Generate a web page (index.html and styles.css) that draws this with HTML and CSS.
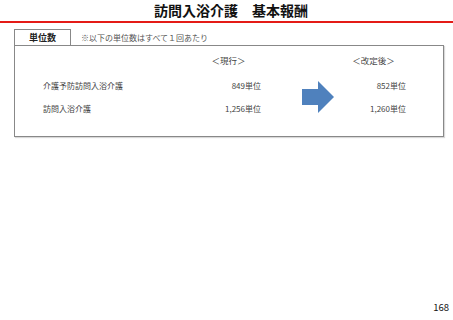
FILE: index.html
```html
<!DOCTYPE html>
<html lang="ja">
<head>
<meta charset="utf-8">
<link rel="stylesheet" href="styles.css">
</head>
<body>
<div class="page">
  <header class="header">
    <h1 class="title">訪問入浴介護　基本報酬</h1>
  </header>
  <main class="content">
    <div class="tabrow">
      <div class="tab">単位数</div>
      <div class="note">※以下の単位数はすべて１回あたり</div>
    </div>
    <div class="box">
      <div class="grid">
        <div class="head c2">＜現行＞</div>
        <div class="head c4">＜改定後＞</div>

        <div class="label r1 c1">介護予防訪問入浴介護</div>
        <div class="num r1 c2">849単位</div>
        <div class="arrow">
          <svg width="32" height="32" viewBox="0 0 32 32"><polygon points="0,8 16,8 16,0 32,16 16,32 16,24 0,24" fill="#4f81bd"/></svg>
        </div>
        <div class="num r1 c4">852単位</div>

        <div class="label r2 c1">訪問入浴介護</div>
        <div class="num r2 c2">1,256単位</div>
        <div class="num r2 c4">1,260単位</div>
      </div>
    </div>
  </main>
  <footer class="footer">168</footer>
</div>
</body>
</html>
```
FILE: styles.css
```css
* { box-sizing: border-box; margin: 0; padding: 0; }
html, body { width: 453px; height: 320px; background: #fff; }
body {
  font-family: "Noto Sans CJK JP", "Noto Sans", sans-serif;
  color: #333;
  overflow: hidden;
}
.page {
  height: 320px;
  display: flex;
  flex-direction: column;
}
.header {
  height: 23px;
  border-bottom: 2px solid #e41b17;
  display: flex;
  justify-content: center;
  padding-left: 9px;
}
.title {
  font-size: 14px;
  font-weight: bold;
  line-height: 21px;
  color: #111;
}
.content {
  padding: 6px 9px 0 14px;
}
.tabrow {
  display: flex;
  align-items: flex-end;
}
.tab {
  width: 57px;
  height: 16px;
  border: 1px solid #888;
  border-bottom: none;
  font-size: 9px;
  font-weight: bold;
  line-height: 15px;
  text-align: center;
  color: #222;
}
.note {
  font-size: 8px;
  line-height: 15px;
  color: #555;
  margin-left: 10px;
}
.box {
  height: 92px;
  border: 1px solid #888;
  box-shadow: 1px 1px 1px rgba(0,0,0,0.15);
  padding: 7px 0 0 28px;
}
.grid {
  display: grid;
  grid-template-columns: 150px 68px 77px 68px;
  grid-template-rows: 14px 14px 14px;
  row-gap: 9px;
  font-size: 8px;
  line-height: 14px;
  color: #444;
}
.head {
  grid-row: 1;
  text-align: center;
  font-size: 8.5px;
  padding-left: 3px;
}
.c1 { grid-column: 1; }
.c2 { grid-column: 2; }
.c4 { grid-column: 4; }
.label, .num { margin-top: 3px; }
.r1 { grid-row: 2; }
.r2 { grid-row: 3; }
.num { text-align: right; }
.arrow {
  grid-column: 3;
  grid-row: 2 / 4;
  justify-self: end;
  align-self: center;
  margin-right: 4px;
  margin-top: 4px;
  display: flex;
}
.footer {
  margin-top: auto;
  margin-bottom: 7px;
  align-self: flex-end;
  margin-right: 4px;
  font-size: 9.5px;
  line-height: 12px;
  color: #111;
}
```
